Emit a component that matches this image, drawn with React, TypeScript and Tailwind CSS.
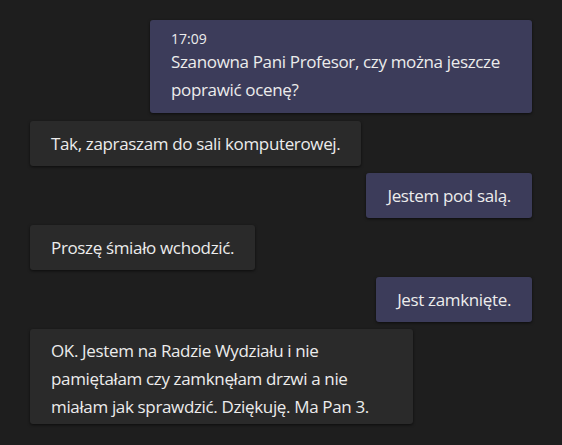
const messages = [
  { mine: true, time: "17:09", text: "Szanowna Pani Profesor, czy można jeszcze poprawić ocenę?" },
  { mine: false, text: "Tak, zapraszam do sali komputerowej." },
  { mine: true, text: "Jestem pod salą." },
  { mine: false, text: "Proszę śmiało wchodzić." },
  { mine: true, text: "Jest zamknięte." },
  {
    mine: false,
    long: true,
    text: "OK. Jestem na Radzie Wydziału i nie pamiętałam czy zamknęłam drzwi a nie miałam jak sprawdzić. Dziękuję. Ma Pan 3.",
  },
];

const App = () => {
  return (
    <div className="min-h-screen w-[562px] h-[445px] bg-[#1e1e1e] px-[30px] pt-[20px] font-['Open_Sans',sans-serif] text-[#ececec]">
      <div className="flex flex-col gap-[7px]">
        {messages.map((m, i) => (
          <div
            key={i}
            className={
              m.time
                ? "self-end max-w-[382px] bg-[#3c3c5a] rounded-[3px] px-[21px] pt-[9px] pb-[9px] mb-[1px] shadow-[0_1px_3px_rgba(0,0,0,0.6)]"
                : m.mine
                  ? "self-end max-w-[382px] bg-[#3c3c5a] rounded-[3px] px-[21px] pt-[9px] pb-[8px] shadow-[0_1px_3px_rgba(0,0,0,0.6)]"
                  : m.long
                    ? "self-start max-w-[383px] bg-[#2a2a2a] rounded-[3px] px-[21px] pt-[8px] pb-[3px] shadow-[0_1px_3px_rgba(0,0,0,0.6)]"
                    : "self-start max-w-[383px] bg-[#2a2a2a] rounded-[3px] px-[21px] pt-[9px] pb-[8px] shadow-[0_1px_3px_rgba(0,0,0,0.6)]"
            }
          >
            {m.time && <div className="text-[14px] leading-[19px]">{m.time}</div>}
            <p className="text-[17px] leading-[28px] tracking-[-0.35px]">{m.text}</p>
          </div>
        ))}
      </div>
    </div>
  );
};

export default App;
